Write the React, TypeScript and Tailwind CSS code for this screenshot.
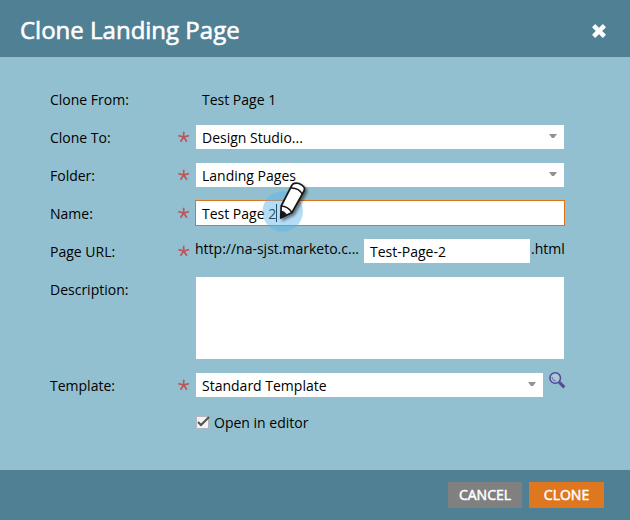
import React from 'react';

function Star() {
  return (
    <svg className="ml-auto mr-[6px] h-3 w-3 shrink-0" viewBox="0 0 12 12" fill="none" stroke="#b9565c" strokeWidth="1.7">
      <path d="M5.7 6V0.8M5.7 6L0.4 4.6M5.7 6L11 4.6M5.7 6L2.5 10.8M5.7 6L8.9 10.8" />
    </svg>
  );
}

function Row({ label, required, className = 'h-6 mb-[14px]', children }: { label: string; required?: boolean; className?: string; children?: React.ReactNode }) {
  return (
    <div className={`flex ${className}`}>
      <div className="flex h-6 w-[146px] shrink-0 items-center">
        <span className="relative top-px">{label}</span>
        {required && <Star />}
      </div>
      {children}
    </div>
  );
}

function Select({ value, className = 'w-[368px]' }: { value: string; className?: string }) {
  return (
    <div className={`flex h-6 items-center justify-between bg-white pl-1.5 pr-[7px] ${className}`}>
      <span className="relative top-px">{value}</span>
      <svg className="mb-[3px] h-1 w-2" viewBox="0 0 8 4" fill="#929292"><path d="M0 0H8L5 4H3Z" /></svg>
    </div>
  );
}

export default function App() {
  return (
    <div className="flex h-[520px] w-[630px] flex-col bg-[#93c0d0] font-['Open_Sans',sans-serif] text-[14px] leading-5 text-black">
      <header className="flex h-[57px] shrink-0 items-center justify-between bg-[#508094] pl-5 pr-6 text-white">
        <h1 className="mt-[3px] text-2xl leading-8 font-normal [-webkit-text-stroke:0.6px_white]">Clone Landing Page</h1>
        <svg className="mt-1 h-[14px] w-[14px]" viewBox="0 0 14 14" stroke="white" strokeWidth="4.4"><path d="M1.6 1.6L12.4 12.4M12.4 1.6L1.6 12.4" /></svg>
      </header>
      <main className="h-[413px] shrink-0 pl-[50px] pt-[30px]">
        <Row label="Clone From:"><span className="pl-1.5 pt-[3px]">Test Page 1</span></Row>
        <Row label="Clone To:" required><Select value="Design Studio..." /></Row>
        <Row label="Folder:" required><Select value="Landing Pages" /></Row>
        <Row label="Name:" required>
          <div className="relative -ml-px -mt-px flex h-[26px] w-[370px] shrink-0 items-center border border-[#dc761e] bg-white pl-1.5">
            <span className="relative top-px">Test Page 2</span>
            <span className="h-[18px] w-px bg-black" />
            <svg className="absolute left-[60px] top-[-26px] h-[60px] w-[60px]" viewBox="0 0 60 60">
              <circle cx="26.7" cy="36.5" r="20.2" fill="#58b4e8" fillOpacity=".45" />
              <g className="drop-shadow-[2px_2px_1.5px_rgba(0,0,0,0.5)]">
                <path d="M24.7 43L25.2 31L35.5 11Q37 7 43 8.5Q50 11.5 48 16L36 37.5Z" fill="#fff" stroke="#171717" strokeWidth="1.7" strokeLinejoin="round" />
                <path d="M34.5 13Q43 12.5 46.5 19.5M25.2 31Q31.5 31 36 37.5" fill="none" stroke="#171717" strokeWidth="1.5" />
                <path d="M24.8 35.5Q28.8 35.8 31 40L24.5 43.3Z" fill="#171717" />
              </g>
            </svg>
          </div>
        </Row>
        <Row label="Page URL:" required>
          <span className="-ml-px w-[169px] shrink-0">http://na-sjst.marketo.c...</span>
          <div className="flex h-6 w-[166px] shrink-0 items-center bg-white pl-1.5"><span className="relative top-px">Test-Page-2</span></div>
          <span className="pl-px">.html</span>
        </Row>
        <Row label="Description:" className="h-[82px] mb-[14px]"><div className="h-[82px] w-[368px] bg-white" /></Row>
        <Row label="Template:" required className="h-6">
          <Select value="Standard Template" className="w-[347px]" />
          <svg className="ml-[5px] -mt-[2px] h-[18px] w-[18px]" viewBox="0 0 18 18" fill="none">
            <circle cx="7.2" cy="7" r="5.3" fill="#a9cada" stroke="#554a98" strokeWidth="1.6" />
            <path d="M4 6Q4.5 9.5 8 10" stroke="#7770ad" strokeWidth="1.2" />
            <path d="M11 11L16.3 16.3" stroke="#554a98" strokeWidth="3.1" />
          </svg>
        </Row>
        <div className="mt-4 flex items-center pl-[146px]">
          <svg className="h-[14px] w-[14px]" viewBox="0 0 14 14"><path d="M.5 .5H12.5V12.5H.5Z" fill="#f3f3f3" stroke="#b1b7ba" /><path d="M2 6L5 9L13 1" fill="none" stroke="#505050" strokeWidth="2" /></svg>
          <span className="pl-1">Open in editor</span>
        </div>
      </main>
      <footer className="flex h-[50px] shrink-0 justify-end gap-[7px] bg-[#508094] pr-[26px] pt-3 font-normal text-white [-webkit-text-stroke:0.5px_white]">
        <button className="h-[26px] w-[74px] bg-[#808080] text-[14px]">CANCEL</button>
        <button className="h-[26px] w-[75px] bg-[#de771f] text-[14px]">CLONE</button>
      </footer>
    </div>
  );
}
